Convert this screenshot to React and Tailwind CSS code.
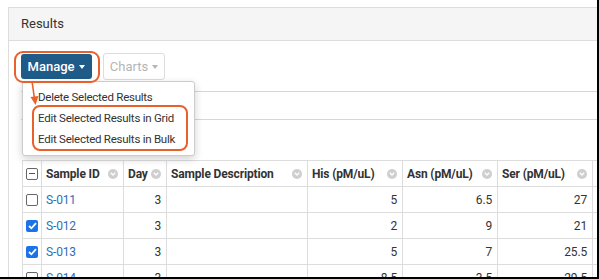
import React from "react";

const rows = [
  { id: "S-011", day: 3, his: "5", asn: "6.5", ser: "27", checked: false },
  { id: "S-012", day: 3, his: "2", asn: "9", ser: "21", checked: true },
  { id: "S-013", day: 3, his: "5", asn: "7", ser: "25.5", checked: true },
  { id: "S-014", day: 3, his: "8.5", asn: "3.5", ser: "29.5", checked: false },
];

function SortIcon() {
  return (
    <span className="flex h-[10px] w-[10px] shrink-0 items-center justify-center rounded-full bg-[#cfcfcf]">
      <svg width="6" height="4" viewBox="0 0 6 4">
        <path d="M0.8 0.8 L3 3 L5.2 0.8" fill="none" stroke="#fff" strokeWidth="1.3" />
      </svg>
    </span>
  );
}

function Box({ checked, minus }) {
  if (checked) {
    return (
      <span className="flex h-[12px] w-[12px] items-center justify-center rounded-[2px] bg-[#1a73e8]">
        <svg width="9" height="8" viewBox="0 0 9 8">
          <path d="M1 4 L3.4 6.3 L8 1.2" fill="none" stroke="#fff" strokeWidth="1.8" />
        </svg>
      </span>
    );
  }
  return (
    <span className="flex h-[12px] w-[12px] items-center justify-center rounded-[2px] border border-[#666] bg-white">
      {minus && <span className="h-[1.5px] w-[6px] bg-[#555]" />}
    </span>
  );
}

function Th({ label, w }) {
  return (
    <th className={`${w} h-[26px] border border-[#ddd] px-[4px] text-left font-bold`}>
      <div className="flex items-center justify-between whitespace-nowrap pr-[1px]">
        <span>{label}</span>
        <SortIcon />
      </div>
    </th>
  );
}

export default function App() {
  return (
    <div
      className="relative h-[279px] w-[599px] overflow-hidden border-r-2 border-b-2 border-black bg-white text-[#333]"
      style={{ fontFamily: "Roboto, 'Liberation Sans', sans-serif" }}
    >
      <div className="pt-[7px] pl-[8px]">
        <div className="w-[700px] border border-[#ddd]">
          <div className="flex h-[33px] items-center border-b border-[#ddd] bg-[#f5f5f5] px-[12px] text-[13px]">
            Results
          </div>
          <div className="pt-[12px] pl-[12px] pb-[20px]">
            <div className="flex items-center gap-[11px]">
              <button className="flex h-[25px] w-[71px] items-center justify-center gap-[5px] rounded-[3px] bg-[#1f5b89] text-[13px] font-medium text-white">
                Manage
                <span className="border-x-[3.5px] border-t-[4px] border-x-transparent border-t-white" />
              </button>
              <button className="flex h-[27px] w-[62px] items-center justify-center gap-[4px] rounded-[3px] border border-[#ddd] text-[13px] text-[#b5b5b5]">
                Charts
                <span className="border-x-[3.5px] border-t-[4px] border-x-transparent border-t-[#b5b5b5]" />
              </button>
            </div>
            <div className="mt-[11px] h-[29px] border-y border-[#d6d6d6]" />
            <div className="mt-[40px] ml-[1px] text-[12px] tracking-[-0.15px]">
              <table className="w-[665px] table-fixed border-collapse">
                <thead>
                  <tr>
                    <th className="h-[26px] w-[19px] border border-[#ddd] px-[3px]">
                      <Box minus />
                    </th>
                    <Th label="Sample ID" w="w-[82px]" />
                    <Th label="Day" w="w-[43px]" />
                    <Th label="Sample Description" w="w-[141px]" />
                    <Th label="His (pM/uL)" w="w-[95px]" />
                    <Th label="Asn (pM/uL)" w="w-[95px]" />
                    <Th label="Ser (pM/uL)" w="w-[95px]" />
                    <Th label="Gly (pM/uL)" w="w-[95px]" />
                  </tr>
                </thead>
                <tbody>
                  {rows.map((r) => (
                    <tr key={r.id} className="h-[26px]">
                      <td className="border border-[#ddd] px-[3px]">
                        <Box checked={r.checked} />
                      </td>
                      <td className="border border-[#ddd] px-[4px] text-[#2f6eb8]">{r.id}</td>
                      <td className="border border-[#ddd] px-[5px] text-right">{r.day}</td>
                      <td className="border border-[#ddd]" />
                      <td className="border border-[#ddd] px-[5px] text-right">{r.his}</td>
                      <td className="border border-[#ddd] px-[5px] text-right">{r.asn}</td>
                      <td className="border border-[#ddd] px-[5px] text-right">{r.ser}</td>
                      <td className="border border-[#ddd]" />
                    </tr>
                  ))}
                </tbody>
              </table>
            </div>
          </div>
        </div>
      </div>

      {/* dropdown menu */}
      <div className="absolute top-[81px] left-[22px] w-[173px] whitespace-nowrap rounded-[3px] border border-[#ccc] bg-white py-[5px] text-[11.5px] tracking-[-0.25px] shadow-[0_3px_8px_rgba(0,0,0,0.18)]">
        <div className="flex h-[21px] items-center pl-[15px]">Delete Selected Results</div>
        <div className="flex h-[21px] items-center pl-[15px]">Edit Selected Results in Grid</div>
        <div className="flex h-[21px] items-center pl-[15px]">Edit Selected Results in Bulk</div>
      </div>

      {/* callouts */}
      <div className="absolute top-[51px] left-[14px] h-[32px] w-[86px] rounded-[9px] border-2 border-[#e8602c]" />
      <div className="absolute top-[105px] left-[32px] h-[46px] w-[156px] rounded-[8px] border-2 border-[#e8602c]" />
      <svg className="absolute top-[80px] left-[27px]" width="14" height="26" viewBox="0 0 14 26">
        <path d="M5 1 L7.5 19" stroke="#e8602c" strokeWidth="1.6" fill="none" />
        <path d="M3.5 17 L8.5 25 L11.5 16 Z" fill="#e8602c" />
      </svg>
    </div>
  );
}
